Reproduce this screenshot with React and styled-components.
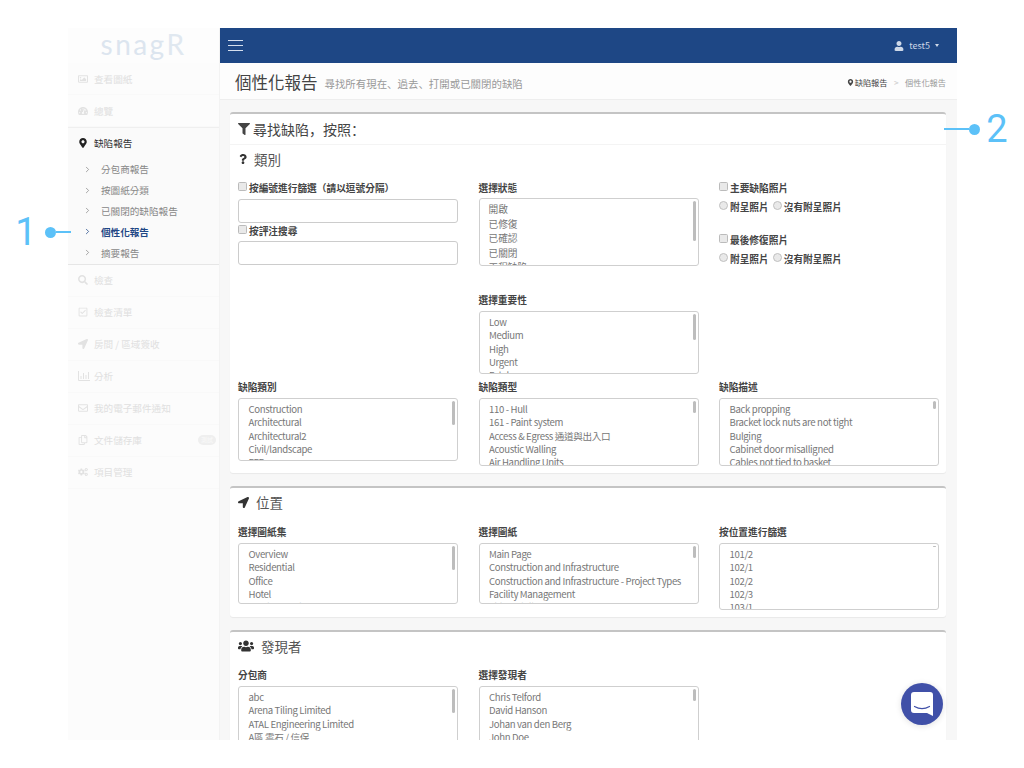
import React from 'react';
import styled, { createGlobalStyle } from 'styled-components';
import { ChevronRight } from 'lucide-react';
import {
  FaCogs, FaFilter, FaLocationArrow, FaMapMarkerAlt, FaQuestion,
  FaRegCheckSquare, FaRegCopy, FaRegEnvelope, FaRegImage, FaSearch, FaTachometerAlt,
  FaUser, FaUsers,
} from 'react-icons/fa';

const FONT = '"Noto Sans CJK TC", "Noto Sans", sans-serif';
const PUNCT_FONT = '"Noto Sans CJK SC", "Noto Sans", sans-serif';

// full-width punctuation, kept as escapes so it can't get normalised to ascii
const SEARCH_TITLE = '尋找缺陷\uFF0C按照\uFF1A';
const FILTER_BY_NUMBER = '按編號進行篩選\uFF08請以逗號分隔\uFF09';

const GlobalStyle = createGlobalStyle`
  html, body {
    margin: 0;
    padding: 0;
    background: #fff;
  }
  body {
    font-family: ${FONT};
    color: #444;
  }
`;

const Page = styled.div`
  position: relative;
  width: 1024px;
  height: 768px;
  overflow: hidden;
  padding: 28px 67px 28px 68px;
  box-sizing: border-box;
`;

const Frame = styled.div`
  display: flex;
  height: 712px;
  overflow: hidden;
`;

const Sidebar = styled.aside`
  width: 152px;
  flex-shrink: 0;
  background: #fcfcfc;
  border-right: 1px solid #f3f3f3;
  box-sizing: border-box;
`;

const Logo = styled.div`
  height: 35px;
  display: flex;
  align-items: center;
  justify-content: center;
  padding: 0 0 3px 0;
  box-sizing: border-box;
  font-family: Lato, sans-serif;
  font-size: 28px;
  line-height: 32px;
  letter-spacing: 2.4px;
  color: #dce5ef;
  background: #fdfdfd;
`;

const LogoMark = styled.span`
  color: #e0e8f0;
`;

const NavRow = styled.div`
  position: relative;
  height: ${p => (p.$current ? 31 : 32)}px;
  display: flex;
  align-items: center;
  padding: ${p => (p.$current ? '0 0 2px 10px' : '0 0 0 10px')};
  font-size: 9.6px;
  color: ${p => (p.$current ? '#333' : '#e0e0e0')};
  border-bottom: ${p => (p.$current ? 'none' : '1px solid #f9f9f9')};
  box-sizing: border-box;
`;

const NavIcon = styled.span`
  width: 16px;
  display: flex;
  align-items: center;
  font-size: 10px;
  color: ${p => (p.$current ? '#222' : '#e2e2e2')};
`;

const Section = styled.div`
  background: #fafafa;
  border-top: 2px solid #efefef;
  border-bottom: 1px solid #e6e6e6;
  margin-top: -1px;
  padding-bottom: 1px;
`;

const SubRow = styled.div`
  height: 20.8px;
  display: flex;
  align-items: center;
  padding-left: 15px;
  font-size: 9.6px;
  font-weight: ${p => (p.$active ? 700 : 400)};
  color: ${p => (p.$active ? '#1e4785' : '#888')};
`;

const SubChevron = styled(ChevronRight)`
  width: 9px;
  height: 9px;
  margin-right: 9px;
  flex-shrink: 0;
  color: ${p => (p.$active ? '#1e4785' : '#888')};
`;

const Badge = styled.span`
  position: absolute;
  right: 3px;
  top: 10px;
  width: 18px;
  height: 10px;
  border-radius: 5px;
  background: #efefef;
  color: #fafafa;
  font-size: 6px;
  line-height: 10px;
  text-align: center;
`;

const Main = styled.main`
  flex: 1;
  min-width: 0;
  background: #f7f7f7;
`;

const Topbar = styled.header`
  height: 35px;
  background: #1e4785;
  display: flex;
  align-items: center;
  justify-content: space-between;
  padding: 0 18px 0 8px;
`;

const Burger = styled.div`
  width: 15px;
  height: 9px;
  border-top: 1px solid #d5dfee;
  border-bottom: 1px solid #d5dfee;
  position: relative;
  &::after {
    content: '';
    position: absolute;
    left: 0;
    right: 0;
    top: 4px;
    height: 1px;
    background: #d5dfee;
  }
`;

const UserMenu = styled.div`
  display: flex;
  align-items: center;
  gap: 5px;
  font-size: 9px;
  color: #cfd9e8;
`;

const Caret = styled.span`
  width: 0;
  height: 0;
  border-left: 2.5px solid transparent;
  border-right: 2.5px solid transparent;
  border-top: 3px solid #cfd9e8;
`;

const TitleBar = styled.div`
  height: 37px;
  box-sizing: border-box;
  background: #fdfdfd;
  border-bottom: 1px solid #eeeeee;
  display: flex;
  align-items: center;
  padding: 2px 11px 0 15px;
`;

const PageTitle = styled.h1`
  margin: 0;
  font-size: 16.5px;
  font-weight: 400;
  color: #444;
`;

const PageSub = styled.span`
  margin-left: 7px;
  font-family: ${PUNCT_FONT};
  font-size: 10.45px;
  color: #999;
  flex: 1;
  padding-top: 3px;
`;

const Crumbs = styled.div`
  display: flex;
  align-items: center;
  gap: 1px;
  font-size: 8.2px;
  color: #444;
`;

const CrumbSep = styled.span`
  margin: 0 5.5px;
  color: #ccc;
`;

const CrumbLast = styled.span`
  color: #999;
`;

const Content = styled.div`
  padding: 12px 11px 0 10px;
  display: flex;
  flex-direction: column;
  gap: 13px;
`;

const Box = styled.section`
  background: #fff;
  border-top: 2px solid #c4c4c4;
  border-radius: 3px;
  box-shadow: 0 1px 1px rgba(0, 0, 0, 0.06);
  padding: 0 7px 7px 8px;
`;

const BoxTitle = styled.h2`
  margin: 0 -7px 0 -8px;
  padding-left: 8px;
  height: 30px;
  display: flex;
  align-items: center;
  gap: 3px;
  font-family: ${PUNCT_FONT};
  font-size: 14px;
  font-weight: 400;
  color: #444;
  border-bottom: 1px solid #f4f4f4;
`;

const Heading = styled.h3`
  margin: 0;
  height: ${p => p.$height}px;
  display: flex;
  align-items: center;
  gap: ${p => p.$gap}px;
  font-size: 13.5px;
  font-weight: 400;
  color: #555;
`;

const HeadIcon = styled.span`
  display: flex;
  color: #333;
  font-size: ${p => p.$size}px;
`;

const Grid = styled.div`
  display: grid;
  grid-template-columns: 220px 220px 220px;
  column-gap: 20.5px;
  row-gap: ${p => p.$rowGap || 0}px;
  margin-top: ${p => p.$top}px;
`;

const Cell = styled.div`
  min-width: 0;
  display: flex;
  flex-direction: column;
`;

const Label = styled.label`
  display: flex;
  align-items: center;
  gap: 2px;
  height: 14px;
  flex-shrink: 0;
  font-size: 9.7px;
  font-weight: 700;
  color: #444;
  margin-top: ${p => p.$top || 0}px;
`;

const Check = styled.input.attrs({ type: 'checkbox' })`
  appearance: none;
  margin: -3px 0 0;
  width: 9px;
  height: 9px;
  flex-shrink: 0;
  background: #e9e9e9;
  border: 1px solid #bbb;
  border-radius: 1.5px;
  box-sizing: border-box;
`;

const Radio = styled.input.attrs({ type: 'radio' })`
  appearance: none;
  margin: -3px 0 0;
  width: 9px;
  height: 9px;
  flex-shrink: 0;
  background: #e9e9e9;
  border: 1px solid #c0c0c0;
  border-radius: 50%;
  box-sizing: border-box;
`;

const RadioRow = styled.div`
  display: flex;
  align-items: center;
  gap: 4px;
  margin-top: 5px;
  height: 14px;
`;

const Input = styled.input.attrs({ type: 'text' })`
  display: block;
  width: 100%;
  height: 24px;
  margin: ${p => p.$top}px 0 0;
  padding: 0;
  border: 1px solid #ccc;
  border-radius: 3px;
  background: #fff;
  box-sizing: border-box;
`;

const List = styled.div`
  position: relative;
  height: ${p => p.$height}px;
  flex-shrink: 0;
  margin-top: ${p => p.$top}px;
  padding: ${p => (p.$tall ? '3px 0 0 9px' : '4px 0 0 9.5px')};
  border: 1px solid #cfcfcf;
  border-radius: 3px;
  background: #fff;
  box-sizing: border-box;
  overflow: hidden;
  font-size: ${p => (p.$tall ? 9.7 : 9.6)}px;
  letter-spacing: ${p => (p.$tall ? 0 : -0.35)}px;
  line-height: ${p => (p.$tall ? 14.6 : 13.3)}px;
  color: #777;
`;

const ListItem = styled.div`
  white-space: nowrap;
`;

const Thumb = styled.span`
  position: absolute;
  top: 2px;
  right: 2px;
  width: 3px;
  height: ${p => p.$size}px;
  border-radius: 2px;
  background: #bdbdbd;
`;

const ChatBubble = styled.div`
  position: absolute;
  left: 901px;
  top: 683px;
  width: 42px;
  height: 42px;
  border-radius: 50%;
  background: #4050a8;
  box-shadow: 0 1px 6px rgba(0, 0, 0, 0.12);
  display: flex;
  align-items: center;
  justify-content: center;
`;

const Callout = styled.div`
  position: absolute;
  left: ${p => p.$left}px;
  top: ${p => p.$top}px;
  display: flex;
  align-items: center;
  color: #5cc1f8;
`;

const CalloutNum = styled.span`
  font-family: Roboto, "Liberation Sans", sans-serif;
  font-size: 38px;
  line-height: 38px;
  width: ${p => p.$width}px;
  text-align: center;
`;

const CalloutDot = styled.span`
  width: 11px;
  height: 11px;
  margin-left: ${p => p.$gap || 0}px;
  border-radius: 50%;
  background: #5cc1f8;
  flex-shrink: 0;
`;

const CalloutLine = styled.span`
  width: ${p => p.$width}px;
  height: 2px;
  background: #5cc1f8;
  flex-shrink: 0;
`;

const ChartIcon = () => (
  <svg width="12" height="10" viewBox="0 0 12 10" fill="none" stroke="currentColor">
    <path d="M.5 0v9.5H12M3 8V5M5.5 8V2M8 8V4M10.5 8V1" />
  </svg>
);

const navTop = [
  { icon: <FaRegImage />, text: '查看圖紙' },
  { icon: <FaTachometerAlt />, text: '總覽' },
];

const navBottom = [
  { icon: <FaSearch />, text: '檢查' },
  { icon: <FaRegCheckSquare />, text: '檢查清單' },
  { icon: <FaLocationArrow />, text: '房間 / 區域簽收' },
  { icon: <ChartIcon />, text: '分析' },
  { icon: <FaRegEnvelope />, text: '我的電子郵件通知' },
  { icon: <FaRegCopy />, text: '文件儲存庫', badge: '測試' },
  { icon: <FaCogs />, text: '項目管理' },
];

const subItems = ['分包商報告', '按圖紙分類', '已關閉的缺陷報告', '個性化報告', '摘要報告'];

const Options = ({ items, thumb, ...rest }) => (
  <List {...rest}>
    {items.map(item => <ListItem key={item}>{item}</ListItem>)}
    <Thumb $size={thumb} />
  </List>
);

const PhotoFilter = ({ title, top }) => (
  <>
    <Label $top={top}><Check />{title}</Label>
    <RadioRow>
      <Label><Radio />附呈照片</Label>
      <Label><Radio />沒有附呈照片</Label>
    </RadioRow>
  </>
);

export default function App() {
  return (
    <Page>
      <GlobalStyle />
      <Frame>
        <Sidebar>
          <Logo>snag<LogoMark>R</LogoMark></Logo>
          {navTop.map(item => (
            <NavRow key={item.text}><NavIcon>{item.icon}</NavIcon>{item.text}</NavRow>
          ))}
          <Section>
            <NavRow $current>
              <NavIcon $current><FaMapMarkerAlt /></NavIcon>缺陷報告
            </NavRow>
            {subItems.map(text => {
              const active = text === '個性化報告';
              return (
                <SubRow key={text} $active={active}>
                  <SubChevron $active={active} />{text}
                </SubRow>
              );
            })}
          </Section>
          {navBottom.map(item => (
            <NavRow key={item.text}>
              <NavIcon>{item.icon}</NavIcon>{item.text}
              {item.badge && <Badge>{item.badge}</Badge>}
            </NavRow>
          ))}
        </Sidebar>

        <Main>
          <Topbar>
            <Burger />
            <UserMenu><FaUser size={10} />test5<Caret /></UserMenu>
          </Topbar>
          <TitleBar>
            <PageTitle>個性化報告</PageTitle>
            <PageSub>尋找所有現在、過去、打開或已關閉的缺陷</PageSub>
            <Crumbs>
              <FaMapMarkerAlt size={7} />缺陷報告<CrumbSep>&gt;</CrumbSep><CrumbLast>個性化報告</CrumbLast>
            </Crumbs>
          </TitleBar>

          <Content>
            <Box>
              <BoxTitle><FaFilter size={12} />{SEARCH_TITLE}</BoxTitle>
              <Heading $height={27} $gap={6}>
                <HeadIcon $size={10}><FaQuestion /></HeadIcon>類別
              </Heading>
              <Grid $top={9} $rowGap={6}>
                <Cell>
                  <Label><Check />{FILTER_BY_NUMBER}</Label>
                  <Input $top={4} />
                  <Label $top={1}><Check />按評注搜尋</Label>
                  <Input $top={3} />
                </Cell>
                <Cell>
                  <Label>選擇狀態</Label>
                  <Options $height={68} $top={3} $tall thumb={40} items={['開啟', '已修復', '已確認', '已關閉', '工程缺陷']} />
                  <Label $top={27}>選擇重要性</Label>
                  <Options $height={63} $top={4} thumb={26} items={['Low', 'Medium', 'High', 'Urgent', 'Fatal']} />
                </Cell>
                <Cell>
                  <PhotoFilter title="主要缺陷照片" />
                  <PhotoFilter title="最後修復照片" top={19} />
                </Cell>
                <Cell>
                  <Label>缺陷類別</Label>
                  <Options $height={63} $top={4} thumb={24} items={['Construction', 'Architectural', 'Architectural2', 'Civil/landscape', 'FFE']} />
                </Cell>
                <Cell>
                  <Label>缺陷類型</Label>
                  <Options $height={68} $top={4} thumb={12} items={['110 - Hull', '161 - Paint system', 'Access & Egress 通道與出入口', 'Acoustic Walling', 'Air Handling Units']} />
                </Cell>
                <Cell>
                  <Label>缺陷描述</Label>
                  <Options $height={68} $top={4} thumb={8} items={['Back propping', 'Bracket lock nuts are not tight', 'Bulging', 'Cabinet door misalligned', 'Cables not tied to basket']} />
                </Cell>
              </Grid>
            </Box>

            <Box>
              <Heading $height={28} $gap={7}>
                <HeadIcon $size={11}><FaLocationArrow /></HeadIcon>位置
              </Heading>
              <Grid $top={9}>
                <Cell>
                  <Label>選擇圖紙集</Label>
                  <Options $height={61} $top={4} thumb={24} items={['Overview', 'Residential', 'Office', 'Hotel', 'Multi-Council']} />
                </Cell>
                <Cell>
                  <Label>選擇圖紙</Label>
                  <Options $height={61} $top={4} thumb={12} items={['Main Page', 'Construction and Infrastructure', 'Construction and Infrastructure - Project Types', 'Facility Management', 'Ship Building']} />
                </Cell>
                <Cell>
                  <Label>按位置進行篩選</Label>
                  <Options $height={67} $top={4} thumb={1} items={['101/2', '102/1', '102/2', '102/3', '103/1']} />
                </Cell>
              </Grid>
            </Box>

            <Box>
              <Heading $height={28} $gap={7}>
                <HeadIcon $size={16}><FaUsers /></HeadIcon>發現者
              </Heading>
              <Grid $top={8}>
                <Cell>
                  <Label>分包商</Label>
                  <Options $height={68} $top={4} thumb={24} items={['abc', 'Arena Tiling Limited', 'ATAL Engineering Limited', 'A區 雲石 / 信保']} />
                </Cell>
                <Cell>
                  <Label>選擇發現者</Label>
                  <Options $height={68} $top={4} thumb={12} items={['Chris Telford', 'David Hanson', 'Johan van den Berg', 'John Doe']} />
                </Cell>
              </Grid>
            </Box>
          </Content>
        </Main>
      </Frame>

      <ChatBubble>
        <svg width="22" height="24" viewBox="0 0 22 24">
          <path d="M3 0h16a3 3 0 0 1 3 3v21l-6-3H3a3 3 0 0 1-3-3V3a3 3 0 0 1 3-3z" fill="#fff" />
          <path d="M3.5 14.5c4.5 2.6 10.5 2.6 15 0" fill="none" stroke="#4050a8" strokeWidth="1.2" strokeLinecap="round" />
        </svg>
      </ChatBubble>

      <Callout $left={15} $top={213}>
        <CalloutNum $width={22}>1</CalloutNum>
        <CalloutDot $gap={8} />
        <CalloutLine $width={15} />
      </Callout>
      <Callout $left={944} $top={110}>
        <CalloutLine $width={25} />
        <CalloutDot />
        <CalloutNum $width={34}>2</CalloutNum>
      </Callout>
    </Page>
  );
}
